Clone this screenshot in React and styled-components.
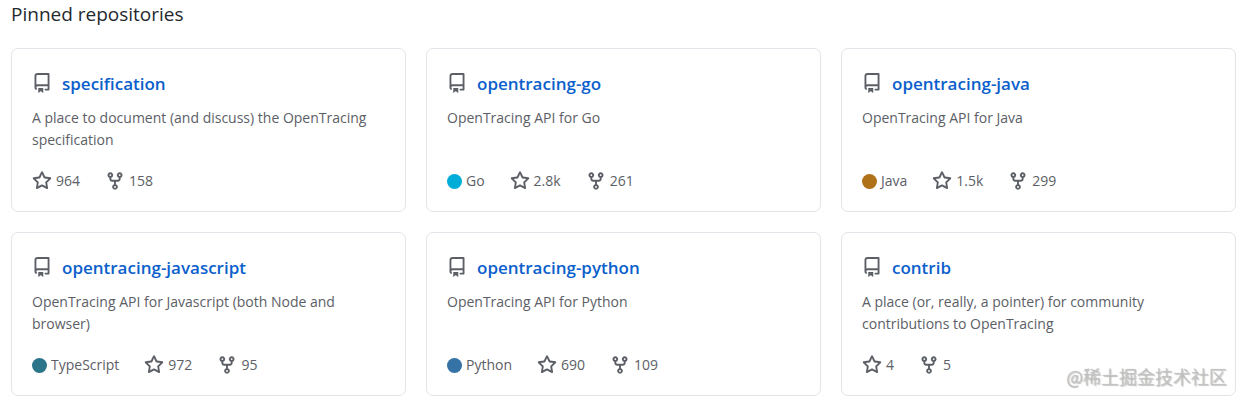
import React from "react";
import styled, { createGlobalStyle } from "styled-components";

const GlobalStyle = createGlobalStyle`
  *, *::before, *::after { box-sizing: border-box; }
  body {
    margin: 0;
    background: #fff;
    color: #24292e;
    font-family: "Open Sans", "Noto Sans", "Noto Sans CJK SC", sans-serif;
    font-size: 14px;
    line-height: 22px;
  }
`;

const Page = styled.main`
  position: relative;
  padding: 0 6px 4px 11px;
`;

const Heading = styled.h2`
  margin: 0 0 20px;
  font-size: 19px;
  font-weight: 400;
  line-height: 28px;
`;

const Grid = styled.ol`
  display: grid;
  grid-template-columns: repeat(3, minmax(0, 1fr));
  gap: 20px;
  margin: 0;
  padding: 0;
  list-style: none;
`;

const Card = styled.li`
  display: flex;
  flex-direction: column;
  padding: 20px;
  border: 1px solid #e1e4e8;
  border-radius: 7px;
`;

const CardTitle = styled.div`
  display: flex;
  align-items: center;
  gap: 10px;
  height: 28px;
`;

const RepoLink = styled.a`
  padding-top: 2px;
  color: #0b5fcc;
  font-size: 17px;
  font-weight: 600;
  line-height: 28px;
  text-decoration: none;
  &:hover { text-decoration: underline; }
`;

const Description = styled.p`
  flex: 1;
  min-height: 44px;
  margin: 10px 0 20px;
  color: #5c6066;
`;

const Stats = styled.div`
  display: flex;
  align-items: center;
  gap: 25px;
  height: 20px;
  color: #5c6066;
`;

const Language = styled.span`
  display: flex;
  align-items: center;
  gap: 4px;
`;

const Dot = styled.span`
  width: 15px;
  height: 15px;
  border-radius: 50%;
  background: ${(p) => p.$color};
`;

const StatLink = styled.a`
  display: flex;
  align-items: center;
  gap: 4px;
  color: inherit;
  text-decoration: none;
`;

const Icon = styled.svg`
  flex: none;
  width: 20px;
  height: 20px;
  fill: #5c6066;
`;

const Watermark = styled.span`
  position: absolute;
  right: 15px;
  bottom: 12px;
  color: #c4c4c4;
  font-family: "Noto Sans CJK SC", sans-serif;
  font-size: 18px;
  font-weight: 300;
  line-height: 24px;
  text-shadow: 0 0 1px #aaa, 1px 1px 1px #bbb;
  pointer-events: none;
`;

const PATHS = {
  repo: "M2 2.5A2.5 2.5 0 014.5 0h8.75a.75.75 0 01.75.75v12.5a.75.75 0 01-.75.75h-2.5a.75.75 0 110-1.5h1.75v-2h-8a1 1 0 00-.714 1.7.75.75 0 01-1.072 1.05A2.495 2.495 0 012 11.5v-9zm10.5-1V9h-8c-.356 0-.694.074-1 .208V2.5a1 1 0 011-1h8zM5 12.25v3.25a.25.25 0 00.4.2l1.45-1.087a.25.25 0 01.3 0L8.6 15.7a.25.25 0 00.4-.2v-3.25a.25.25 0 00-.25-.25h-3.5a.25.25 0 00-.25.25z",
  star: "M8 .25a.75.75 0 01.673.418l1.882 3.815 4.21.612a.75.75 0 01.416 1.279l-3.046 2.97.719 4.192a.75.75 0 01-1.088.791L8 12.347l-3.766 1.98a.75.75 0 01-1.088-.79l.72-4.194L.818 6.374a.75.75 0 01.416-1.28l4.21-.611L7.327.668A.75.75 0 018 .25zm0 2.445L6.615 5.5a.75.75 0 01-.564.41l-3.097.45 2.24 2.184a.75.75 0 01.216.664l-.528 3.084 2.769-1.456a.75.75 0 01.698 0l2.77 1.456-.53-3.084a.75.75 0 01.216-.664l2.24-2.183-3.096-.45a.75.75 0 01-.564-.41L8 2.694v.001z",
  fork: "M5 3.25a.75.75 0 11-1.5 0 .75.75 0 011.5 0zm0 2.122a2.25 2.25 0 10-1.5 0v.878A2.25 2.25 0 005.75 8.5h1.5v2.128a2.251 2.251 0 101.5 0V8.5h1.5a2.25 2.25 0 002.25-2.25v-.878a2.25 2.25 0 10-1.5 0v.878a.75.75 0 01-.75.75h-4.5A.75.75 0 015 6.25v-.878zm3.75 7.378a.75.75 0 11-1.5 0 .75.75 0 011.5 0zm3-8.75a.75.75 0 100-1.5.75.75 0 000 1.5z",
};

function Octicon({ name }) {
  return (
    <Icon viewBox="0 0 16 16" aria-hidden="true">
      <path fillRule="evenodd" d={PATHS[name]} />
    </Icon>
  );
}

const REPOS = [
  { name: "specification", text: "A place to document (and discuss) the OpenTracing specification", stars: "964", forks: "158" },
  { name: "opentracing-go", text: "OpenTracing API for Go", language: "Go", color: "#00add8", stars: "2.8k", forks: "261" },
  { name: "opentracing-java", text: "OpenTracing API for Java", language: "Java", color: "#b07219", stars: "1.5k", forks: "299" },
  { name: "opentracing-javascript", text: "OpenTracing API for Javascript (both Node and browser)", language: "TypeScript", color: "#2b7489", stars: "972", forks: "95" },
  { name: "opentracing-python", text: "OpenTracing API for Python", language: "Python", color: "#3572a5", stars: "690", forks: "109" },
  { name: "contrib", text: "A place (or, really, a pointer) for community contributions to OpenTracing", stars: "4", forks: "5" },
];

function RepoCard({ repo }) {
  return (
    <Card>
      <CardTitle>
        <Octicon name="repo" />
        <RepoLink href={`#${repo.name}`}>{repo.name}</RepoLink>
      </CardTitle>
      <Description>{repo.text}</Description>
      <Stats>
        {repo.language && (
          <Language>
            <Dot $color={repo.color} />
            {repo.language}
          </Language>
        )}
        <StatLink href={`#${repo.name}-stars`}>
          <Octicon name="star" />
          {repo.stars}
        </StatLink>
        <StatLink href={`#${repo.name}-forks`}>
          <Octicon name="fork" />
          {repo.forks}
        </StatLink>
      </Stats>
    </Card>
  );
}

export default function App() {
  return (
    <>
      <GlobalStyle />
      <Page>
        <Heading>Pinned repositories</Heading>
        <Grid>
          {REPOS.map((repo) => (
            <RepoCard key={repo.name} repo={repo} />
          ))}
        </Grid>
        <Watermark>@稀土掘金技术社区</Watermark>
      </Page>
    </>
  );
}
